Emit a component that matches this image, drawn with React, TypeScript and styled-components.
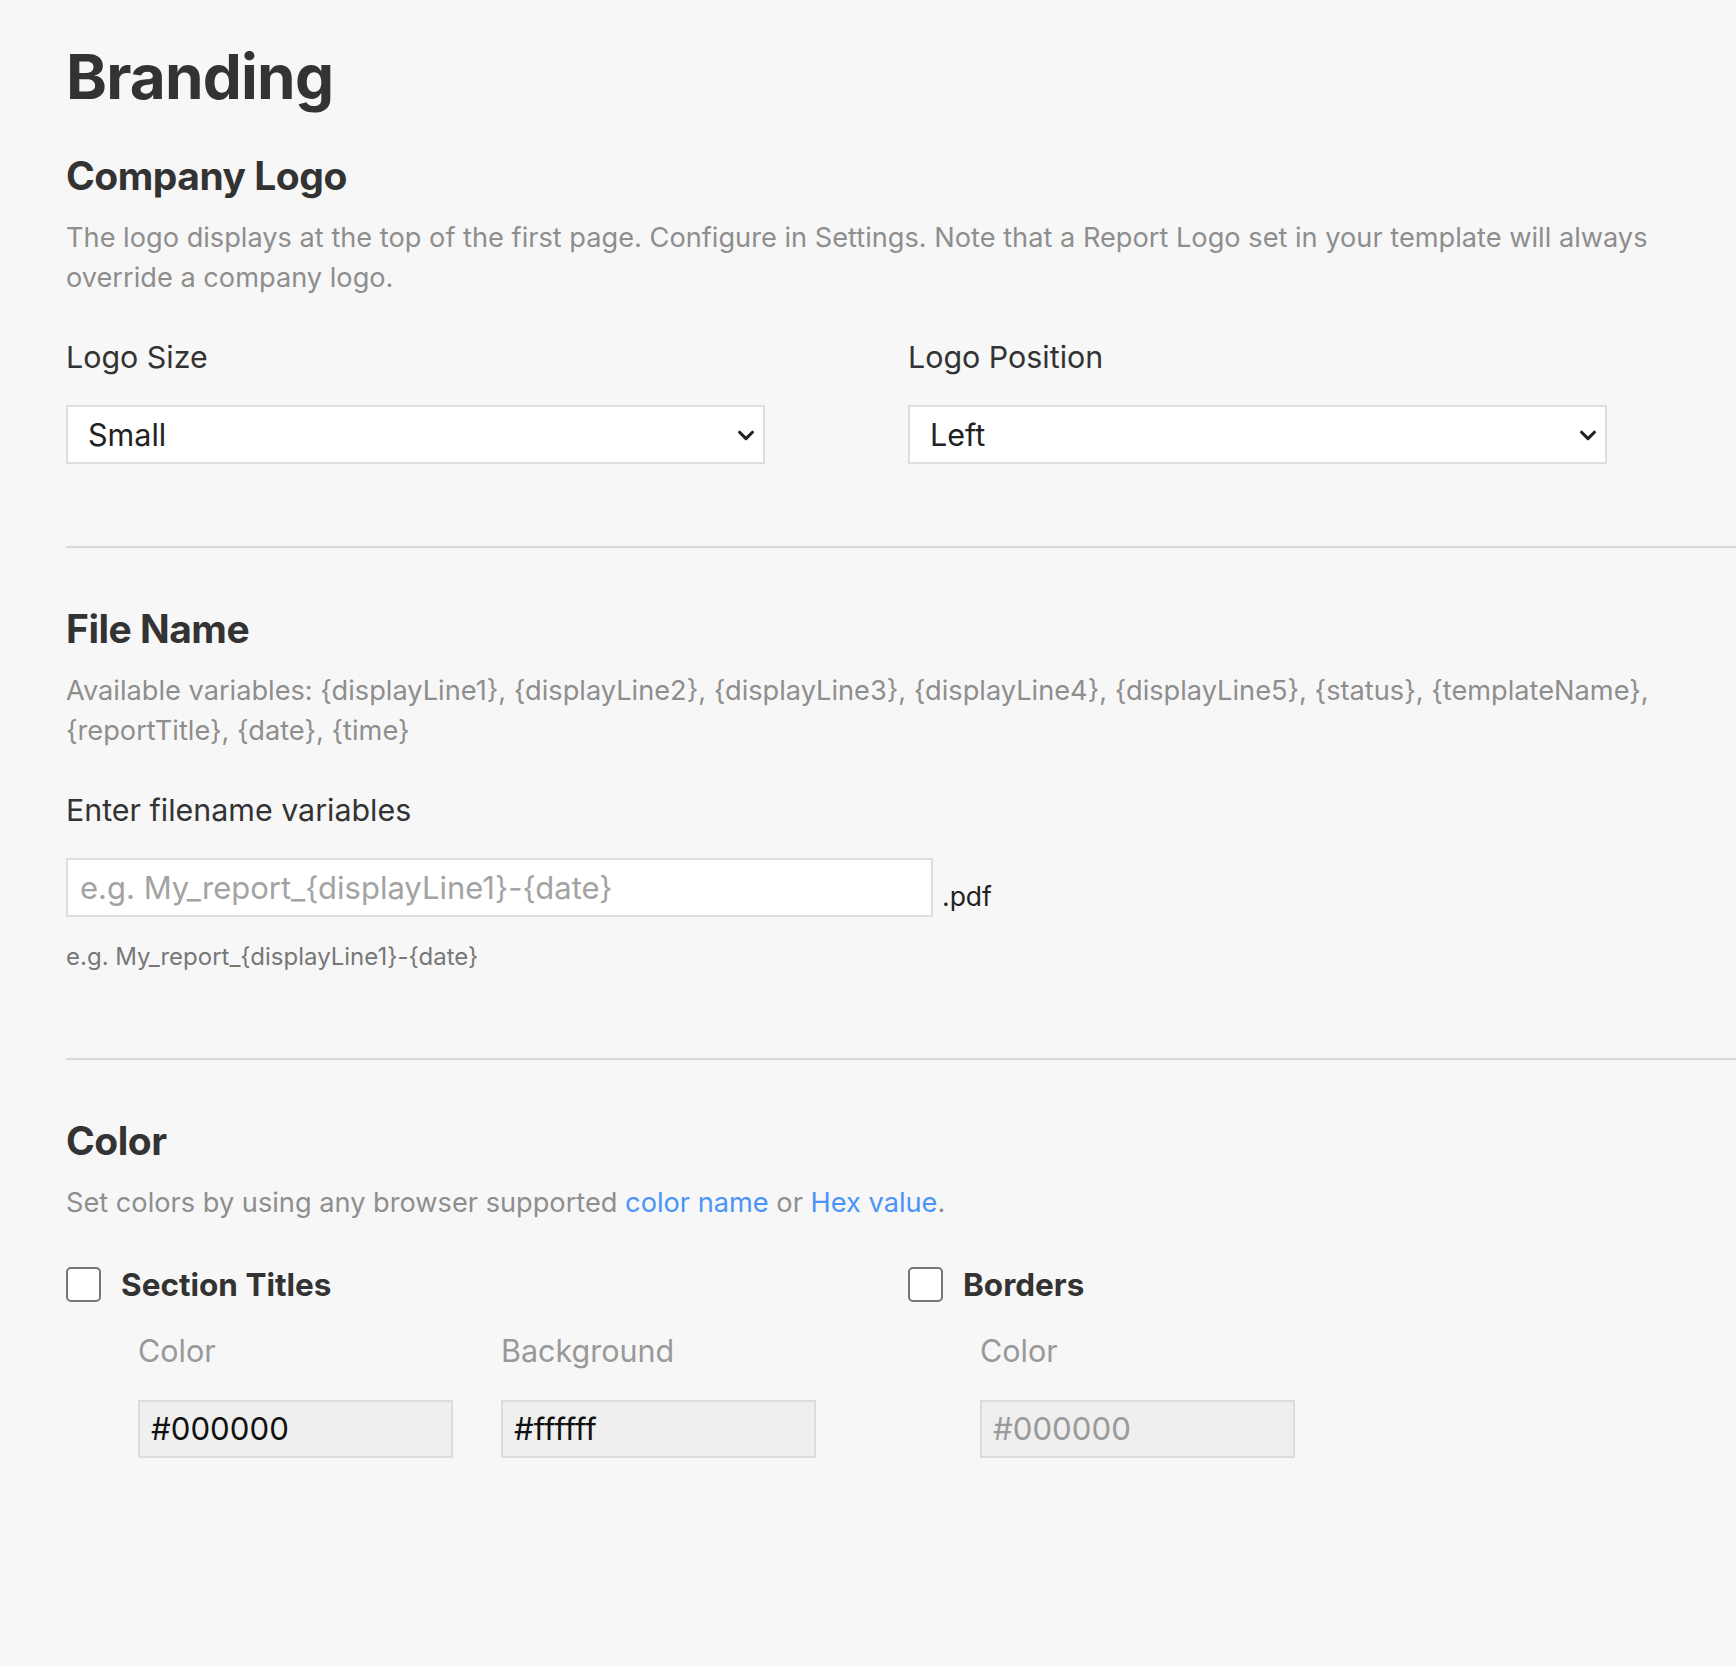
import styled, { createGlobalStyle } from 'styled-components';

const GlobalStyle = createGlobalStyle`
  html, body {
    margin: 0;
    padding: 0;
    background: #f7f7f7;
  }
  body {
    font-family: Inter, "Noto Sans", "Liberation Sans", sans-serif;
    color: #333;
  }
`;

const Page = styled.div`
  min-height: 1666px;
  padding: 39px 0 0 66px;
  box-sizing: border-box;
  background: #f7f7f7;
`;

const Title = styled.h1`
  margin: 0;
  font-size: 62px;
  line-height: 76px;
  font-weight: 700;
  letter-spacing: -0.8px;
  color: #333;
`;

const Section = styled.section<{ first?: boolean }>`
  padding: ${({ first }) => (first ? '37px 0 82px' : '57px 0 86px')};
  border-bottom: 2px solid #d9d9d9;
  &:last-child {
    border-bottom: none;
  }
`;

const Heading = styled.h2`
  margin: 0;
  font-size: 39px;
  line-height: 48px;
  font-weight: 700;
  letter-spacing: -0.5px;
  color: #333;
`;

const Description = styled.p`
  margin: 18px 66px 0 0;
  font-size: 27.2px;
  line-height: 40px;
  color: #8e8e8e;
`;

const Link = styled.a`
  color: #4a94f7;
  text-decoration: none;
`;

const Columns = styled.div`
  display: grid;
  grid-template-columns: 842px 842px;
  margin-top: 41px;
`;

const Field = styled.div`
  display: flex;
  flex-direction: column;
  gap: 30px;
`;

const Label = styled.label`
  font-size: 30.4px;
  line-height: 36px;
  color: #333;
`;

const SelectWrap = styled.div`
  position: relative;
  width: 699px;
  height: 59px;
`;

const Select = styled.select`
  appearance: none;
  width: 100%;
  height: 100%;
  box-sizing: border-box;
  border: 2px solid #dedede;
  border-radius: 0;
  background: #fff;
  padding: 0 48px 0 20px;
  font-family: inherit;
  font-size: 30.5px;
  color: #222;
`;

const Chevron = styled.svg`
  position: absolute;
  right: 8px;
  top: 50%;
  transform: translateY(-50%);
  pointer-events: none;
`;

const InputRow = styled.div`
  display: flex;
  align-items: flex-end;
  gap: 9px;
`;

const TextInput = styled.input`
  width: 867px;
  height: 59px;
  box-sizing: border-box;
  border: 2px solid #dedede;
  background: #fff;
  padding: 0 12px;
  font-family: inherit;
  font-size: 31px;
  color: #333;
  &::placeholder {
    color: #a3a3a3;
  }
`;

const Suffix = styled.span`
  font-size: 26.5px;
  line-height: 34px;
  padding-bottom: 4px;
  color: #222;
`;

const Helper = styled.div`
  margin-top: 25px;
  font-size: 24px;
  line-height: 30px;
  color: #777;
`;

const CheckRow = styled.label`
  display: flex;
  align-items: center;
  gap: 20px;
  height: 40px;
`;

const Box = styled.span`
  width: 35px;
  height: 35px;
  box-sizing: border-box;
  border: 2px solid #767676;
  border-radius: 5px;
  background: #fff;
`;

const CheckText = styled.span`
  font-size: 31.5px;
  font-weight: 700;
  color: #333;
`;

const SubFields = styled.div`
  display: flex;
  gap: 48px;
  margin: 29px 0 0 72px;
`;

const SubField = styled.div`
  display: flex;
  flex-direction: column;
  gap: 31px;
`;

const SubLabel = styled.span`
  font-size: 30.5px;
  line-height: 36px;
  color: #999;
`;

const ColorInput = styled.input<{ muted?: boolean }>`
  width: 315px;
  height: 58px;
  box-sizing: border-box;
  border: 2px solid #dcdcdc;
  background: #efefef;
  padding: 0 11px;
  font-family: inherit;
  font-size: 31.2px;
  color: ${({ muted }) => (muted ? '#9a9a9a' : '#111')};
`;

const ChevronIcon = () => (
  <Chevron width="22" height="22" viewBox="0 0 24 24" fill="none">
    <path d="M5 9l7 7 7-7" stroke="#222" strokeWidth="3.4" strokeLinecap="round" strokeLinejoin="round" />
  </Chevron>
);

export default function App() {
  return (
    <Page>
      <GlobalStyle />
      <Title>Branding</Title>

      <Section first>
        <Heading>Company Logo</Heading>
        <Description>
          The logo displays at the top of the first page. Configure in Settings. Note that a Report Logo set in your
          template will always override a company logo.
        </Description>
        <Columns>
          <Field>
            <Label>Logo Size</Label>
            <SelectWrap>
              <Select defaultValue="small">
                <option value="small">Small</option>
                <option value="medium">Medium</option>
                <option value="large">Large</option>
              </Select>
              <ChevronIcon />
            </SelectWrap>
          </Field>
          <Field>
            <Label>Logo Position</Label>
            <SelectWrap>
              <Select defaultValue="left">
                <option value="left">Left</option>
                <option value="center">Center</option>
                <option value="right">Right</option>
              </Select>
              <ChevronIcon />
            </SelectWrap>
          </Field>
        </Columns>
      </Section>

      <Section>
        <Heading>File Name</Heading>
        <Description>
          Available variables: {'{displayLine1}'}, {'{displayLine2}'}, {'{displayLine3}'}, {'{displayLine4}'},{' '}
          {'{displayLine5}'}, {'{status}'}, {'{templateName}'}, {'{reportTitle}'}, {'{date}'}, {'{time}'}
        </Description>
        <Field style={{ marginTop: 41 }}>
          <Label>Enter filename variables</Label>
          <InputRow>
            <TextInput placeholder="e.g. My_report_{displayLine1}-{date}" />
            <Suffix>.pdf</Suffix>
          </InputRow>
        </Field>
        <Helper>e.g. My_report_{'{displayLine1}'}-{'{date}'}</Helper>
      </Section>

      <Section>
        <Heading>Color</Heading>
        <Description>
          Set colors by using any browser supported <Link href="#">color name</Link> or{' '}
          <Link href="#">Hex value</Link>.
        </Description>
        <Columns>
          <div>
            <CheckRow>
              <Box />
              <CheckText>Section Titles</CheckText>
            </CheckRow>
            <SubFields>
              <SubField>
                <SubLabel>Color</SubLabel>
                <ColorInput defaultValue="#000000" />
              </SubField>
              <SubField>
                <SubLabel>Background</SubLabel>
                <ColorInput defaultValue="#ffffff" />
              </SubField>
            </SubFields>
          </div>
          <div>
            <CheckRow>
              <Box />
              <CheckText>Borders</CheckText>
            </CheckRow>
            <SubFields>
              <SubField>
                <SubLabel>Color</SubLabel>
                <ColorInput muted defaultValue="#000000" />
              </SubField>
            </SubFields>
          </div>
        </Columns>
      </Section>
    </Page>
  );
}
